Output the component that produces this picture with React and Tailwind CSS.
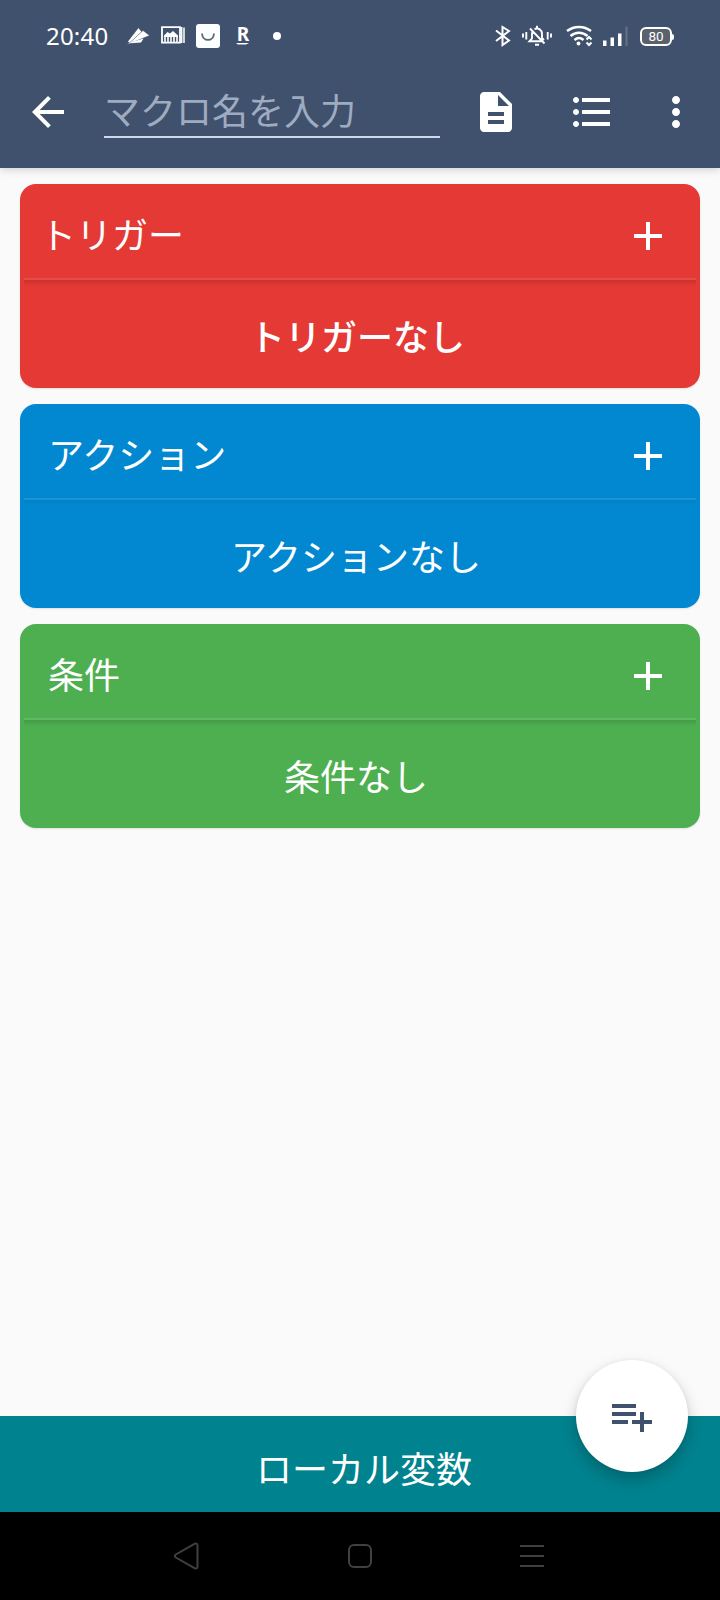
function Glyph({ d, className = "text-white" }) {
  return (
    <svg viewBox="0 0 24 24" className={`size-12 shrink-0 ${className}`} fill="currentColor">
      <path d={d} />
    </svg>
  );
}

const icons = {
  back: "M20 11H7.83l5.59-5.59L12 4l-8 8 8 8 1.41-1.41L7.83 13H20v-2z",
  doc: "M14 2H6c-1.1 0-2 .9-2 2v16c0 1.1.9 2 2 2h12c1.1 0 2-.9 2-2V8l-6-6zm2 16H8v-2h8v2zm0-4H8v-2h8v2zm-3-5V3.5L18.5 9H13z",
  list: "M4 10.5c-.83 0-1.5.67-1.5 1.5s.67 1.5 1.5 1.5 1.5-.67 1.5-1.5-.67-1.5-1.5-1.5zm0-6c-.83 0-1.5.67-1.5 1.5S3.17 7.500 4 7.500 5.500 6.830 5.500 6 4.830 4.500 4 4.500zm0 12c-.83 0-1.500.68-1.500 1.500s.68 1.500 1.500 1.500 1.500-.68 1.500-1.500-.67-1.500-1.500-1.500zM7 19h14v-2H7v2zm0-6h14v-2H7v2zm0-8v2h14V5H7z",
  more: "M12 8c1.1 0 2-.9 2-2s-.9-2-2-2-2 .9-2 2 .9 2 2 2zm0 2c-1.1 0-2 .9-2 2s.9 2 2 2 2-.9 2-2-.9-2-2-2zm0 6c-1.1 0-2 .9-2 2s.9 2 2 2 2-.9 2-2-.9-2-2-2z",
  plus: "M19 13h-6v6h-2v-6H5v-2h6V5h2v6h6v2z",
  playlistAdd: "M14 10H2v2h12v-2zm0-4H2v2h12V6zm4 8v-4h-2v4h-4v2h4v4h2v-4h4v-2h-4zM2 16h8v-2H2v2z",
};

function StatusBar() {
  return (
    <div className="flex h-14 items-start pt-6 text-white">
      <span className="ml-[46px] w-[63px] font-['Noto_Sans'] text-[24px] leading-6 tracking-[0.2px] whitespace-nowrap">
        20:40
      </span>
      {/* folded paper */}
      <svg viewBox="0 0 24 24" className="ml-[17px] size-6" fill="currentColor">
        <path d="M2 17.500 12.500 4l3 4L4 19z" />
        <path d="M3.500 19 17 6.500l6.500 5L9 17.500z" stroke="#3f516c" strokeWidth="0.500" />
        <path d="M1 19.500 17.500 14.500l-2.500 4z" />
      </svg>
      {/* gallery */}
      <svg viewBox="0 0 24 20" className="ml-[11px] mt-[2px] h-5 w-6" fill="none" stroke="currentColor">
        <path d="M1 1.200h18v15.500H1z" strokeWidth="1.800" />
        <path d="M20.700 1v16M23 1.500v15.500" strokeWidth="1.500" />
        <path d="M3 9.500 6.500 6 9 7.500 12 5l5 4.500V11H3z" fill="currentColor" stroke="none" />
        <path d="M4 10v6M7 10v6M10 10v6M13 10v6M16 10v6" strokeWidth="1.600" />
      </svg>
      {/* shopping pouch */}
      <svg viewBox="0 0 24 24" className="ml-[11px] size-6">
        <rect width="24" height="24" rx="3" fill="#fcfeff" />
        <path d="M6 9.500c.5 8.500 11.500 8.500 12 0" fill="none" stroke="#5b6675" strokeWidth="1.800" />
      </svg>
      <span className="ml-4 mt-[2px] flex w-3.5 flex-col items-center font-['Noto_Sans'] text-[19px] leading-[16px] font-bold">
        R
        <svg viewBox="0 0 14 3" className="mt-px h-[3px] w-3.5" fill="currentColor">
          <path d="M0 0h13l-3 1.500H2z" />
        </svg>
      </span>
      <span className="mt-2 ml-[23px] size-2 rounded-full bg-white" />
      {/* bluetooth */}
      <svg viewBox="0 0 18 22" className="ml-[213px] mt-px h-[22px] w-[18px]" fill="none" stroke="currentColor" strokeWidth="2">
        <path d="M2 5.500 15 15.500 8.500 20V2L15 6 2 16" />
      </svg>
      {/* vibrate, bell off */}
      <svg viewBox="0 0 30 22" className="ml-[10px] mt-px h-[22px] w-[30px]" fill="none" stroke="currentColor" strokeWidth="1.900">
        <path d="M1 8.500v4M4.300 7v7.500M25.700 7v7.500M29 8.500v4" />
        <path d="M20 16.200H7.500l2.500-2.700V9c0-1 .3-2 1-2.800M12.500 4c4-1.500 7.500.8 7.500 5v4l2 2M15 .8v2.500M8 3.500l14.500 15M13 19.800h4" />
      </svg>
      {/* wifi */}
      <svg viewBox="0 0 28 22" className="ml-[14px] mt-px h-[22px] w-7" fill="none" stroke="currentColor" strokeWidth="2.500">
        <path d="M1 6c7-5.500 17-5.500 24 0M4.500 11c5-4.500 12-4.500 17 0M8.500 15c3-2.600 6-2.600 9 0" />
        <circle cx="12.500" cy="18.500" r="1.900" fill="currentColor" stroke="none" />
        <path d="m20.500 14.500 2.500-2.500 2.500 2.500M20.500 17.500 23 20l2.500-2.500" strokeWidth="2" />
      </svg>
      {/* signal strength */}
      <svg viewBox="0 0 26 22" className="ml-[9px] h-[22px] w-[26px]" fill="currentColor">
        <path d="M0 16.500h3.500V22H0zM7.500 13.500H11V22H7.500zM15 9.500h3.500V22H15z" />
        <path d="M22.500 2.500h2V22h-2z" opacity="0.200" />
      </svg>
      {/* battery */}
      <span className="relative ml-[11px] mt-[3px] flex h-[19px] w-8 items-center justify-center rounded-[6px] border-2 border-white bg-[#5a616c] font-['Roboto'] text-[13.5px] leading-none">
        80
        <span className="absolute -right-1 h-1.5 w-0.5 rounded-r-sm bg-white" />
      </span>
    </div>
  );
}

function Toolbar() {
  return (
    <div className="flex h-28 items-start pt-8 pl-6">
      <Glyph d={icons.back} />
      <div className="ml-8 h-[50px] w-[336px] border-b-2 border-[#cddaea] text-[36px] leading-[42px] text-[#9fabc0]">
        マクロ名を入力
      </div>
      <Glyph d={icons.doc} className="ml-8 text-white" />
      <Glyph d={icons.list} className="ml-12 text-white" />
      <Glyph d={icons.more} className="ml-9 text-white" />
    </div>
  );
}

function Section({ title, empty, card, divider, shade, emptyClass = "pr-2", titleClass = "pl-6" }) {
  return (
    <section className={`flex h-[204px] flex-col rounded-2xl px-1 text-[36px] text-white shadow-[0_1px_2px_rgba(0,0,0,0.1)] ${card}`}>
      <div className={`flex h-[96px] items-center justify-between border-b-2 pt-2.5 pr-6 ${divider}`}>
        <h2 className={`-mt-1.5 leading-[52px] ${titleClass}`}>{title}</h2>
        <Glyph d={icons.plus} />
      </div>
      <div className={`h-1.5 bg-linear-to-b to-transparent ${shade}`} />
      <p className={`mt-[23px] text-center leading-[52px] ${emptyClass}`}>{empty}</p>
    </section>
  );
}

export default function App() {
  return (
    <div className="flex h-[1600px] w-[720px] flex-col overflow-hidden bg-[#fafafa] font-['Noto_Sans_CJK_JP',sans-serif]">
      <header className="h-[168px] shrink-0 bg-[#3f516c] shadow-[0_2px_8px_rgba(0,0,0,0.16)]">
        <StatusBar />
        <Toolbar />
      </header>
      <main className="flex flex-1 flex-col gap-4 px-5 pt-4">
        <Section title="トリガー" empty="トリガーなし" card="bg-[#e43935]" divider="border-[#e94b46]" shade="from-black/12" titleClass="pl-4" emptyClass="pr-1.5 font-medium" />
        <Section title="アクション" empty="アクションなし" card="bg-[#0288d1]" divider="border-[#1b94d7]" shade="from-black/6" />
        <Section title="条件" empty="条件なし" card="bg-[#4eaf51]" divider="border-[#60b963]" shade="from-black/12" />
      </main>
      <footer className="relative flex h-24 shrink-0 items-center justify-center bg-[#00838f] pt-1.5 pl-2 text-[36px] leading-[52px] text-white">
        <span>ローカル変数</span>
        <button className="absolute -top-14 right-8 flex size-28 items-center justify-center rounded-full bg-white shadow-[0_8px_16px_rgba(0,0,0,0.22),0_0_4px_rgba(0,0,0,0.06)]">
          <Glyph d={icons.playlistAdd} className="text-[#3f516c]" />
        </button>
      </footer>
      <nav className="flex h-[88px] shrink-0 items-center bg-black pl-[173px] text-[#404040]">
        <svg viewBox="0 0 28 28" className="size-7" fill="none" stroke="currentColor" strokeWidth="2" strokeLinejoin="round">
          <path d="M2.800 12.500 21.500 1.800c1.500-.8 3 0 3 1.500v21.400c0 1.500-1.500 2.300-3 1.500L2.800 15.500c-1.300-.8-1.300-2.200 0-3z" />
        </svg>
        <svg viewBox="0 0 24 24" className="ml-[147px] size-6" fill="none" stroke="currentColor" strokeWidth="2">
          <rect x="1" y="1" width="22" height="22" rx="5" />
        </svg>
        <svg viewBox="0 0 24 24" className="ml-[148px] size-6" fill="none" stroke="currentColor" strokeWidth="2">
          <path d="M0 2h24M0 12h24M0 22h24" />
        </svg>
      </nav>
    </div>
  );
}
